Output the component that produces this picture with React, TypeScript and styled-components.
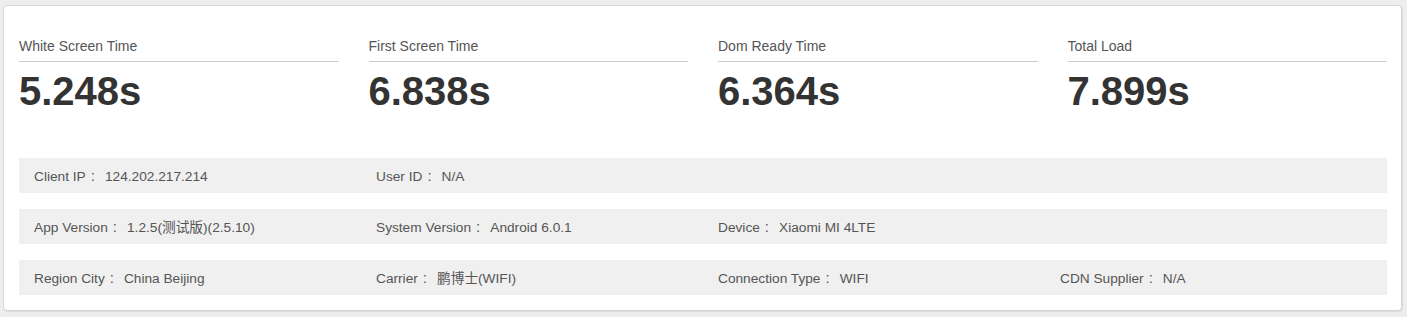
import styled, { createGlobalStyle } from "styled-components";

const GlobalStyle = createGlobalStyle`
  body {
    margin: 0;
    background: #eeeeee;
    font-family: "Liberation Sans", Arial, "Noto Sans CJK SC", sans-serif;
  }
`;

const metrics = [
  { label: "White Screen Time", value: "5.248s" },
  { label: "First Screen Time", value: "6.838s" },
  { label: "Dom Ready Time", value: "6.364s" },
  { label: "Total Load", value: "7.899s" },
];

const infoRows = [
  [
    { label: "Client IP", value: "124.202.217.214" },
    { label: "User ID", value: "N/A" },
  ],
  [
    { label: "App Version", value: "1.2.5(测试版)(2.5.10)" },
    { label: "System Version", value: "Android 6.0.1" },
    { label: "Device", value: "Xiaomi MI 4LTE" },
  ],
  [
    { label: "Region City", value: "China Beijing" },
    { label: "Carrier", value: "鹏博士(WIFI)" },
    { label: "Connection Type", value: "WIFI" },
    { label: "CDN Supplier", value: "N/A" },
  ],
];

export default function App() {
  return (
    <Page>
      <GlobalStyle />
      <Card>
        <MetricGrid>
          {metrics.map((m) => (
            <Metric key={m.label}>
              <MetricLabel>{m.label}</MetricLabel>
              <MetricValue>{m.value}</MetricValue>
            </Metric>
          ))}
        </MetricGrid>
        <InfoList>
          {infoRows.map((row, i) => (
            <InfoRow key={i}>
              {row.map((item) => (
                <InfoCell key={item.label}>
                  {item.label}
                  <Colon>:</Colon>
                  {item.value}
                </InfoCell>
              ))}
            </InfoRow>
          ))}
        </InfoList>
      </Card>
    </Page>
  );
}

const Page = styled.div`
  padding: 5px 5px 5px 3px;
`;

const Card = styled.div`
  background: #fff;
  border: 1px solid #d6d6d6;
  border-radius: 4px;
  box-shadow: 1px 1px 1px rgba(0, 0, 0, 0.08);
  padding: 30px 14px 15px 15px;
`;

const MetricGrid = styled.div`
  display: grid;
  grid-template-columns: repeat(4, 1fr);
  column-gap: 30px;
`;

const Metric = styled.div`
  display: flex;
  flex-direction: column;
`;

const MetricLabel = styled.div`
  font-size: 14px;
  line-height: 20px;
  color: #555;
  padding-bottom: 5px;
  border-bottom: 1px solid #cccccc;
`;

const MetricValue = styled.div`
  margin-top: 7px;
  font-size: 40px;
  line-height: 44px;
  font-weight: 700;
  color: #333;
`;

const InfoList = styled.div`
  margin-top: 45px;
  display: flex;
  flex-direction: column;
  gap: 16px;
`;

const InfoRow = styled.div`
  display: grid;
  grid-template-columns: repeat(4, 1fr);
  background: #f0f0f0;
  height: 35px;
  align-items: center;
`;

const InfoCell = styled.div`
  padding: 2px 0 0 15px;
  font-size: 13.7px;
  line-height: 18px;
  color: #555;
  white-space: nowrap;
`;

const Colon = styled.span`
  font-size: 15px;
  margin: 0 10px 0 5px;
`;
